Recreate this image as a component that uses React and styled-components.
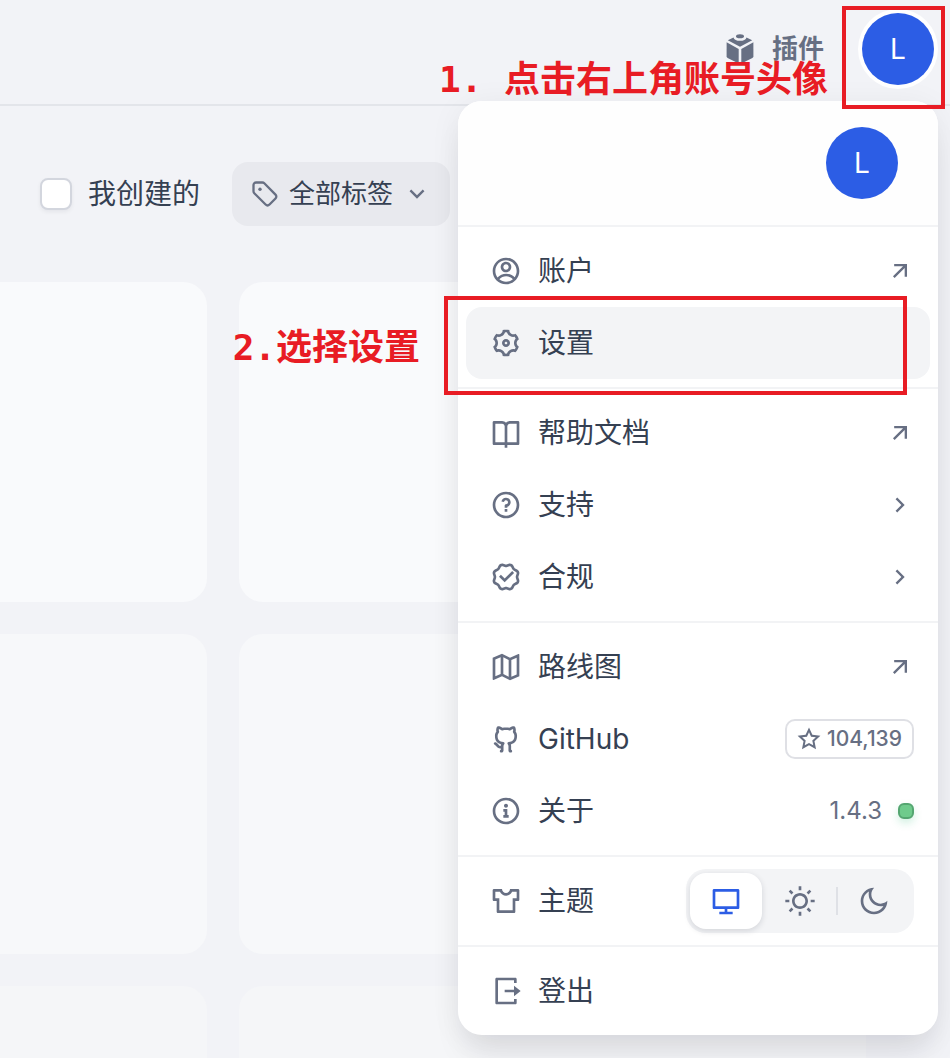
import React, { useState } from "react";
import styled, { createGlobalStyle, css } from "styled-components";
import {
  RiAccountCircleLine,
  RiArrowDownSLine,
  RiArrowRightSLine,
  RiArrowRightUpLine,
  RiBookOpenLine,
  RiComputerLine,
  RiGithubLine,
  RiInformation2Line,
  RiLogoutBoxRLine,
  RiMap2Line,
  RiMoonLine,
  RiQuestionLine,
  RiSettings3Line,
  RiStarLine,
  RiSunLine,
  RiTShirt2Line,
  RiVerifiedBadgeLine,
} from "react-icons/ri";

const color = {
  page: "#f2f3f7",
  text: "#354052",
  muted: "#676f83",
  blue: "#2c5de5",
  line: "#f2f3f5",
  hover: "#f3f4f6",
  mark: "#e81c24",
};

const GlobalStyle = createGlobalStyle`
  *, *::before, *::after { box-sizing: border-box; }
  html, body { margin: 0; background: ${color.page}; }
  body {
    font-family: Inter, "Noto Sans CJK SC", sans-serif;
    color: ${color.text};
  }
  button { font: inherit; color: inherit; border: 0; background: none; padding: 0; cursor: pointer; }
  a { color: inherit; text-decoration: none; }
  svg { display: block; flex: none; }
`;

const Page = styled.div`
  height: 100vh;
  overflow: hidden;
  display: flex;
  flex-direction: column;
`;

const Header = styled.header`
  display: flex;
  align-items: center;
  justify-content: flex-end;
  flex: none;
  padding: 9px 12px 15px;
  border-bottom: 2px solid #e3e5ea;
`;

const PluginLink = styled.a`
  display: flex;
  align-items: center;
  gap: 16px;
  margin-right: 34px;
  font-size: 26px;
  line-height: 40px;
  font-weight: 600;
  color: ${color.muted};
`;

const Account = styled.div`
  position: relative;
`;

const Avatar = styled.span`
  display: flex;
  align-items: center;
  justify-content: center;
  width: 72px;
  height: 72px;
  border-radius: 50%;
  background: ${color.blue};
  color: #fff;
  font-size: 28px;
  line-height: 40px;
`;

const AvatarButton = styled.button`
  display: block;
  padding: 4px;
  border-radius: 50%;
  background: #fff;
`;

const Toolbar = styled.div`
  display: flex;
  align-items: center;
  gap: 32px;
  flex: none;
  padding: 56px 40px;
`;

const CheckLabel = styled.label`
  display: flex;
  align-items: center;
  gap: 16px;
  font-size: 28px;
  line-height: 40px;
`;

const Checkbox = styled.input`
  appearance: none;
  width: 32px;
  height: 32px;
  margin: 0;
  border: 2px solid #d3d6de;
  border-radius: 8px;
  background: #fff;
  box-shadow: 0 2px 4px rgba(16, 24, 40, 0.06);
  &:checked { background: ${color.blue}; }
`;

const TagButton = styled.button`
  display: flex;
  align-items: center;
  height: 64px;
  padding: 0 19px;
  border-radius: 16px;
  background: #e8e9ee;
  font-size: 26px;
  line-height: 40px;
  svg { color: ${color.muted}; }
`;

const TagText = styled.span`
  padding: 0 10px;
`;

const CardGrid = styled.main`
  display: grid;
  grid-template-columns: 207px minmax(0, 1fr);
  grid-auto-rows: 320px;
  gap: 32px;
  flex: 1;
  min-height: 0;
  overflow: hidden;
  padding-right: 84px;
`;

const Card = styled.div`
  border-radius: ${(p) => (p.$edge ? "0 24px 24px 0" : "24px")};
  background: ${(p) => p.$shade};
`;

const Menu = styled.nav`
  position: absolute;
  top: 92px;
  right: 0;
  z-index: 2;
  width: 480px;
  border-radius: 24px;
  background: #fff;
  box-shadow: 0 24px 32px -8px rgba(16, 24, 40, 0.1), 0 4px 32px rgba(16, 24, 40, 0.06);
`;

const Profile = styled.div`
  display: flex;
  justify-content: flex-end;
  padding: 26px 40px;
  border-radius: 24px 24px 0 0;
  background: #fefefe;
`;

const Section = styled.div`
  padding: 8px;
  border-top: 2px solid ${color.line};
`;

const rowStyle = css`
  position: relative;
  display: flex;
  align-items: center;
  gap: 16px;
  width: 100%;
  height: 72px;
  padding: 0 16px 0 24px;
  border-radius: 16px;
  background: ${(p) => (p.$active ? color.hover : "transparent")};
  font-size: 28px;
  line-height: 40px;
  text-align: left;
  svg { color: ${color.muted}; }
`;

const RowLink = styled.a`${rowStyle}`;
const RowButton = styled.button`${rowStyle}`;
const RowGroup = styled.div`${rowStyle}`;

const RowLabel = styled.span`
  flex: 1;
`;

const StarBadge = styled.span`
  display: flex;
  align-items: center;
  gap: 6px;
  height: 40px;
  padding: 0 10px;
  border: 2px solid #dfe0e5;
  border-radius: 10px;
  font-size: 21px;
  line-height: 24px;
  font-weight: 500;
  color: ${color.muted};
`;

const Version = styled.span`
  display: flex;
  align-items: center;
  gap: 16px;
  font-size: 24px;
  line-height: 32px;
  color: ${color.muted};
`;

const StatusDot = styled.i`
  width: 16px;
  height: 16px;
  border: 2px solid #55a671;
  border-radius: 6px;
  background: #6fcb8c;
  box-shadow: 0 4px 8px rgba(23, 178, 106, 0.2);
`;

const ThemeSwitch = styled.div`
  display: flex;
  gap: 2px;
  padding: 4px;
  border-radius: 20px;
  background: ${color.hover};
`;

const ThemeOption = styled.button`
  position: relative;
  display: flex;
  align-items: center;
  justify-content: center;
  width: 72px;
  height: 56px;
  border-radius: 16px;
  background: ${(p) => (p.$on ? "#fff" : "transparent")};
  box-shadow: ${(p) => (p.$on ? "0 2px 6px rgba(16, 24, 40, 0.14)" : "none")};
  && svg { color: ${(p) => (p.$on ? color.blue : color.muted)}; }
  ${(p) =>
    p.$divided &&
    css`
      &::before {
        content: "";
        position: absolute;
        left: -2px;
        top: 14px;
        width: 2px;
        height: 28px;
        background: #dfe1e6;
      }
    `}
`;

const Mark = styled.span`
  position: absolute;
  z-index: 3;
  border: 4px solid ${color.mark};
  pointer-events: none;
`;

const AvatarMark = styled(Mark)`
  top: -3px;
  right: -7px;
  width: 103px;
  height: 103px;
`;

const SettingsMark = styled(Mark)`
  top: -11px;
  left: -22px;
  right: 23px;
  height: 99px;
`;

const Note = styled.span`
  position: absolute;
  right: calc(100% + 28px);
  top: 28px;
  z-index: 3;
  white-space: pre;
  font-family: "DejaVu Sans Mono", "Noto Sans CJK SC", monospace;
  font-size: 36px;
  line-height: 40px;
  font-weight: 700;
  color: ${color.mark};
`;

const AvatarNote = styled(Note)`
  right: calc(100% + 18px);
  top: 50px;
`;

function PluginIcon() {
  return (
    <svg width="32" height="32" viewBox="0 0 32 32" fill="currentColor" aria-hidden="true">
      <ellipse cx="16" cy="3.2" rx="4" ry="2" />
      <path d="M9.5 4.4 3.8 7.2 16 13.8 28.2 7.2 22.5 4.4C22 6.8 19.5 7.8 16 7.8S10 6.8 9.5 4.4Z" />
      <path d="M2.6 9.3 14.7 16V30.4L3.6 24.9Q2.6 24.4 2.6 23.3Z" />
      <path d="M29.4 9.3 17.3 16V30.4L28.4 24.9Q29.4 24.4 29.4 23.3Z" />
    </svg>
  );
}

function TagIcon() {
  return (
    <svg width="28" height="28" viewBox="0 0 28 28" fill="none" stroke="currentColor" strokeWidth="2.3" strokeLinejoin="round" aria-hidden="true">
      <path d="M2.5 5v6.3c0 .8.3 1.5.8 2l11.3 11.2c1.1 1.1 2.8 1.1 3.9 0l6-6c1.1-1.1 1.1-2.8 0-3.9L13.3 3.3c-.5-.5-1.2-.8-2-.8H5A2.5 2.5 0 0 0 2.5 5Z" />
      <circle cx="9" cy="9.3" r="1.7" fill="currentColor" stroke="none" />
    </svg>
  );
}

const cardShades = ["#f9fafc", "#f7f8fa", "#f5f6f8"];
const themes = [
  ["system", RiComputerLine, "跟随系统"],
  ["light", RiSunLine, "浅色"],
  ["dark", RiMoonLine, "深色"],
];

export default function App() {
  const [theme, setTheme] = useState("system");
  return (
    <Page>
      <GlobalStyle />
      <Header>
        <PluginLink href="#plugins">
          <PluginIcon />
          插件
        </PluginLink>
        <Account>
          <AvatarButton type="button">
            <Avatar>L</Avatar>
          </AvatarButton>
          <Menu>
            <Profile>
              <Avatar>L</Avatar>
            </Profile>
            <Section>
              <RowLink href="#account">
                <RiAccountCircleLine size={32} />
                <RowLabel>账户</RowLabel>
                <RiArrowRightUpLine size={28} />
              </RowLink>
              <RowButton type="button" $active>
                <RiSettings3Line size={32} />
                <RowLabel>设置</RowLabel>
                <SettingsMark>
                  <Note>2.选择设置</Note>
                </SettingsMark>
              </RowButton>
            </Section>
            <Section>
              <RowLink href="#docs">
                <RiBookOpenLine size={32} />
                <RowLabel>帮助文档</RowLabel>
                <RiArrowRightUpLine size={28} />
              </RowLink>
              <RowButton type="button">
                <RiQuestionLine size={32} />
                <RowLabel>支持</RowLabel>
                <RiArrowRightSLine size={28} />
              </RowButton>
              <RowButton type="button">
                <RiVerifiedBadgeLine size={32} />
                <RowLabel>合规</RowLabel>
                <RiArrowRightSLine size={28} />
              </RowButton>
            </Section>
            <Section>
              <RowLink href="#roadmap">
                <RiMap2Line size={32} />
                <RowLabel>路线图</RowLabel>
                <RiArrowRightUpLine size={28} />
              </RowLink>
              <RowLink href="#github">
                <RiGithubLine size={32} />
                <RowLabel>GitHub</RowLabel>
                <StarBadge>
                  <RiStarLine size={24} />
                  104,139
                </StarBadge>
              </RowLink>
              <RowButton type="button">
                <RiInformation2Line size={32} />
                <RowLabel>关于</RowLabel>
                <Version>
                  1.4.3
                  <StatusDot />
                </Version>
              </RowButton>
            </Section>
            <Section>
              <RowGroup>
                <RiTShirt2Line size={32} />
                <RowLabel>主题</RowLabel>
                <ThemeSwitch>
                  {themes.map(([id, Icon, name]) => (
                    <ThemeOption
                      key={id}
                      type="button"
                      aria-label={name}
                      aria-pressed={theme === id}
                      $on={theme === id}
                      $divided={id === "dark"}
                      onClick={() => setTheme(id)}
                    >
                      <Icon size={32} />
                    </ThemeOption>
                  ))}
                </ThemeSwitch>
              </RowGroup>
            </Section>
            <Section>
              <RowButton type="button">
                <RiLogoutBoxRLine size={32} />
                <RowLabel>登出</RowLabel>
              </RowButton>
            </Section>
          </Menu>
          <AvatarMark>
            <AvatarNote>1. 点击右上角账号头像</AvatarNote>
          </AvatarMark>
        </Account>
      </Header>
      <Toolbar>
        <CheckLabel>
          <Checkbox type="checkbox" />
          我创建的
        </CheckLabel>
        <TagButton type="button">
          <TagIcon />
          <TagText>全部标签</TagText>
          <RiArrowDownSLine size={28} />
        </TagButton>
      </Toolbar>
      <CardGrid>
        {cardShades.map((shade) => (
          <React.Fragment key={shade}>
            <Card $shade={shade} $edge />
            <Card $shade={shade} />
          </React.Fragment>
        ))}
      </CardGrid>
    </Page>
  );
}
